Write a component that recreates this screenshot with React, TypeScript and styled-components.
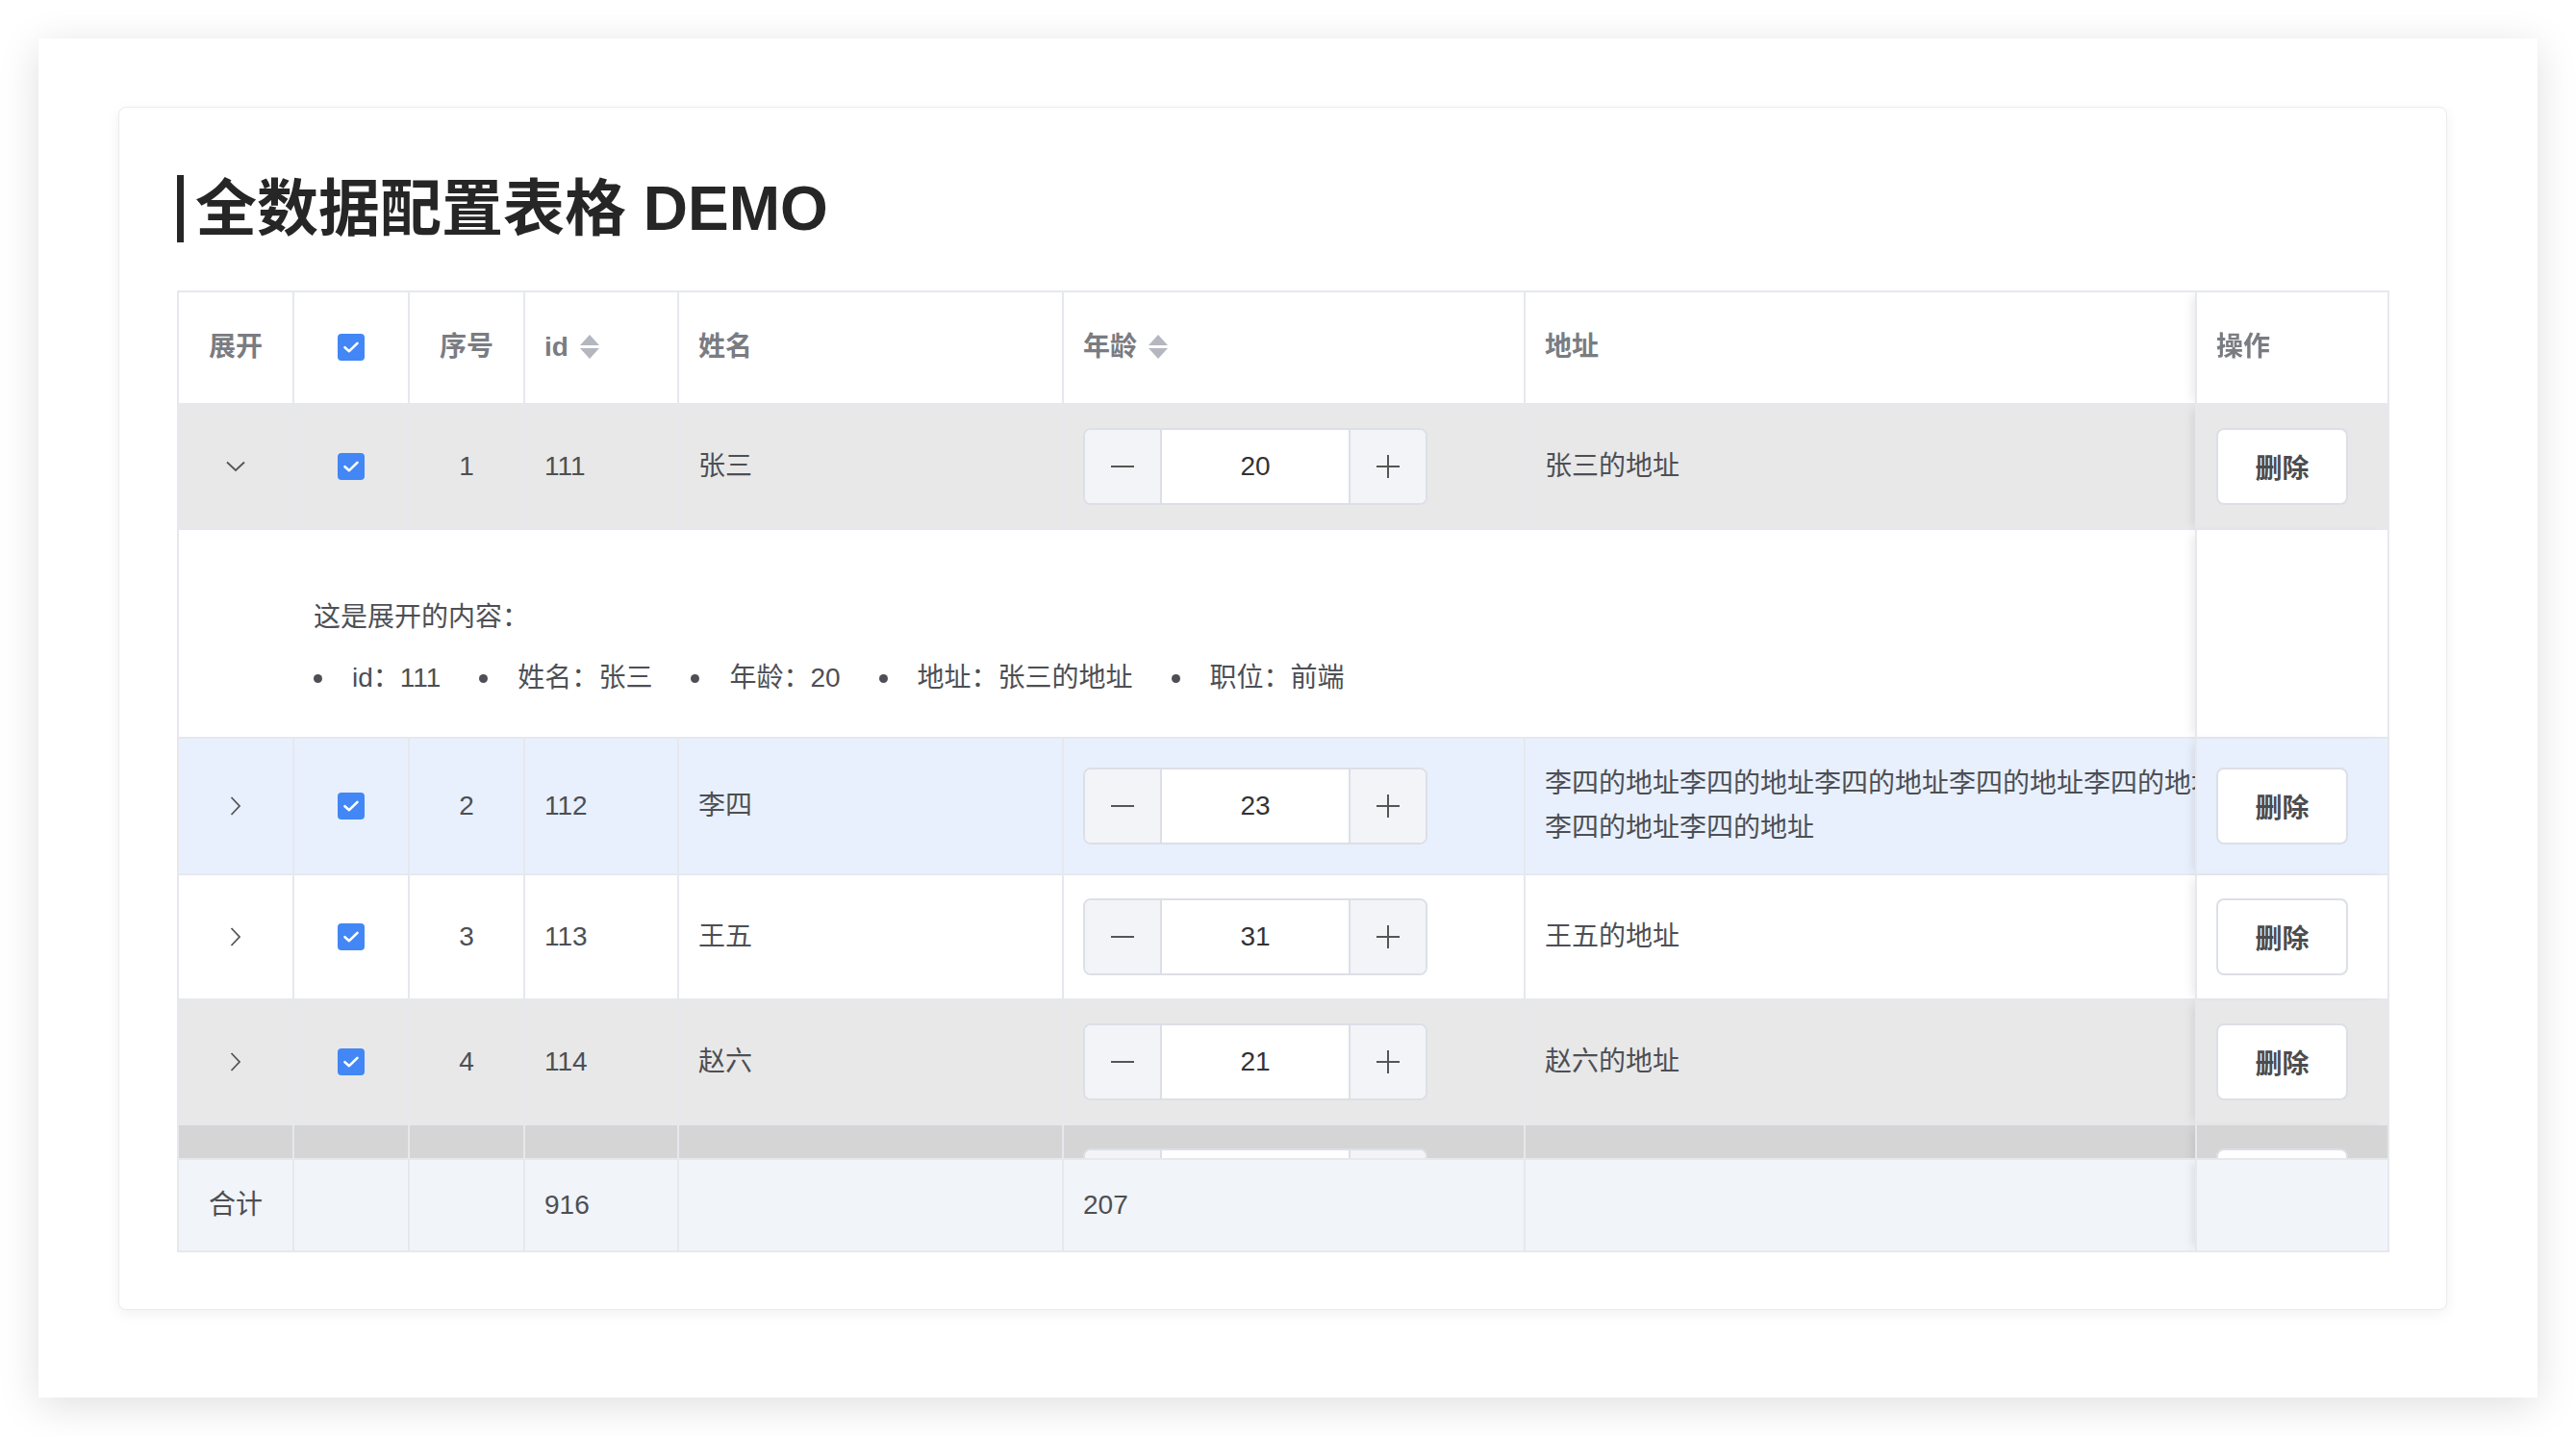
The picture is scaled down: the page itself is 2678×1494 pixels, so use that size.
import React from "react";
import styled, { createGlobalStyle, css } from "styled-components";

const GlobalStyle = createGlobalStyle`
  html, body { margin: 0; padding: 0; background: #ffffff; }
  body { font-family: "Liberation Sans", "Noto Sans CJK SC", sans-serif; }
  * { box-sizing: border-box; }
`;

const LINE = "#e6e8ed";
const COLS = [120, 120, 120, 160, 400, 480, 760, 200];

const Page = styled.div`
  padding: 40px;
`;

const Frame = styled.div`
  background: #ffffff;
  padding: 71px 94px 91px 83px;
  box-shadow: 0 8px 40px rgba(0, 0, 0, 0.13);
`;

const Card = styled.section`
  background: #ffffff;
  border: 1px solid #e9ebef;
  border-radius: 8px;
  box-shadow: 0 4px 14px rgba(0, 0, 0, 0.06);
  padding: 70px 59px 59px 60px;
`;

const Title = styled.h1`
  margin: 0 0 50px;
  border-left: 7px solid #262626;
  padding-left: 12px;
  font-size: 64px;
  line-height: 70px;
  font-weight: 700;
  color: #262626;
`;

const TableBox = styled.div`
  border: 2px solid ${LINE};
  color: #4d4f54;
  font-size: 28px;
`;

const Scroller = styled.div<{ $height?: number }>`
  overflow: hidden;
  ${(p) => (p.$height ? `height: ${p.$height}px;` : "")}
`;

const Grid = styled.table`
  width: 2360px;
  table-layout: fixed;
  border-collapse: separate;
  border-spacing: 0;
`;

const fixedCss = css`
  position: sticky;
  right: 0;
  border-left: 2px solid ${LINE};
  box-shadow: -6px 0 10px -4px rgba(0, 0, 0, 0.1);
`;

const HeadCell = styled.th<{ $align?: string; $fixed?: boolean }>`
  padding: 34px 20px 35px;
  line-height: 46px;
  font-weight: 700;
  color: #7a7c82;
  text-align: ${(p) => p.$align || "left"};
  vertical-align: middle;
  border-right: 2px solid ${LINE};
  border-bottom: 2px solid ${LINE};
  background: #ffffff;
  white-space: nowrap;
  &:last-child {
    border-right: 0;
  }
  ${(p) => p.$fixed && fixedCss}
`;

const Row = styled.tr<{ $bg: string }>`
  background: ${(p) => p.$bg};
`;

const Cell = styled.td<{ $align?: string; $fixed?: boolean }>`
  padding: 24px 20px;
  line-height: 46px;
  text-align: ${(p) => p.$align || "left"};
  vertical-align: middle;
  border-right: 2px solid ${LINE};
  border-bottom: 2px solid ${LINE};
  background: inherit;
  word-break: break-all;
  &:last-child {
    border-right: 0;
  }
  ${(p) => p.$fixed && fixedCss}
`;

const ExpandCell = styled.td`
  padding: 68px 20px 38px 140px;
  border-bottom: 2px solid ${LINE};
  background: inherit;
  line-height: 46px;
`;

const FootCell = styled.td<{ $align?: string; $fixed?: boolean }>`
  padding: 24px 20px;
  line-height: 46px;
  text-align: ${(p) => p.$align || "left"};
  border-right: 2px solid ${LINE};
  border-top: 2px solid ${LINE};
  background: #f1f4f9;
  &:last-child {
    border-right: 0;
  }
  ${(p) => p.$fixed && fixedCss}
`;

const ExpandTitle = styled.div`
  margin: 0;
`;

const DetailList = styled.ul`
  list-style: none;
  margin: 17px 0 0;
  padding: 0;
  display: flex;
  gap: 40px;
`;

const DetailItem = styled.li`
  display: flex;
  align-items: center;
  gap: 31px;
  &::before {
    content: "";
    width: 9px;
    height: 9px;
    border-radius: 50%;
    background: #4d4f54;
  }
`;

const Box = styled.span`
  display: flex;
  width: 28px;
  height: 28px;
  margin: 0 auto;
  border-radius: 4px;
  background: #4287f5;
  align-items: center;
  justify-content: center;
`;

const IconWrap = styled.span`
  display: flex;
  justify-content: center;
  align-items: center;
  height: 46px;
`;

const SortLabel = styled.span`
  display: inline-flex;
  align-items: center;
  gap: 12px;
`;

const Stepper = styled.div`
  display: flex;
  width: 358px;
  height: 80px;
  border: 2px solid #dcdfe6;
  border-radius: 8px;
  overflow: hidden;
  background: #ffffff;
`;

const StepButton = styled.span<{ $side: "left" | "right" }>`
  flex: none;
  width: 80px;
  background: #f2f4f8;
  display: flex;
  align-items: center;
  justify-content: center;
  ${(p) =>
    p.$side === "left"
      ? `border-right: 2px solid #dcdfe6;`
      : `border-left: 2px solid #dcdfe6;`}
`;

const StepValue = styled.span`
  flex: 1;
  display: flex;
  align-items: center;
  justify-content: center;
  color: #333333;
  font-size: 28px;
`;

const DeleteButton = styled.button`
  display: block;
  width: 137px;
  height: 80px;
  padding: 0;
  border: 2px solid #dcdfe6;
  border-radius: 8px;
  background: #ffffff;
  font-family: inherit;
  font-size: 28px;
  font-weight: 700;
  color: #4a4c50;
`;

const CheckMark = () => (
  <Box>
    <svg width="18" height="14" viewBox="0 0 18 14">
      <path
        d="M2.5 7.2 L7 11.2 L15.5 2.8"
        stroke="#ffffff"
        strokeWidth="2.6"
        fill="none"
        strokeLinecap="round"
        strokeLinejoin="round"
      />
    </svg>
  </Box>
);

const Chevron = ({ open }: { open: boolean }) => (
  <IconWrap>
    {open ? (
      <svg width="20" height="12" viewBox="0 0 20 12">
        <path d="M1 1.5 L10 10 L19 1.5" stroke="#555" strokeWidth="1.8" fill="none" />
      </svg>
    ) : (
      <svg width="12" height="20" viewBox="0 0 12 20">
        <path d="M1.5 1 L10 10 L1.5 19" stroke="#555" strokeWidth="1.8" fill="none" />
      </svg>
    )}
  </IconWrap>
);

const SortIcon = () => (
  <svg width="20" height="26" viewBox="0 0 20 26">
    <polygon points="10,0 20,11 0,11" fill="#b4b7bf" />
    <polygon points="0,14 20,14 10,25" fill="#b4b7bf" />
  </svg>
);

const Stroke = ({ plus }: { plus?: boolean }) => (
  <svg width="24" height="24" viewBox="0 0 24 24">
    <line x1="0" y1="12" x2="24" y2="12" stroke="#555" strokeWidth="2" />
    {plus && <line x1="12" y1="0" x2="12" y2="24" stroke="#555" strokeWidth="2" />}
  </svg>
);

const AgeStepper = ({ value }: { value: number }) => (
  <Stepper>
    <StepButton $side="left">
      <Stroke />
    </StepButton>
    <StepValue>{value}</StepValue>
    <StepButton $side="right">
      <Stroke plus />
    </StepButton>
  </Stepper>
);

type Person = {
  seq: number;
  id: number;
  name: string;
  age: number;
  address: string;
  bg: string;
  open?: boolean;
};

const people: Person[] = [
  { seq: 1, id: 111, name: "张三", age: 20, address: "张三的地址", bg: "#e8e8e9", open: true },
  { seq: 2, id: 112, name: "李四", age: 23, address: "李四的地址".repeat(7), bg: "#e8f0fd" },
  { seq: 3, id: 113, name: "王五", age: 31, address: "王五的地址", bg: "#ffffff" },
  { seq: 4, id: 114, name: "赵六", age: 21, address: "赵六的地址", bg: "#e8e8e8" },
  { seq: 5, id: 115, name: "孙七", age: 28, address: "孙七的地址", bg: "#d5d5d5" },
];

const Cols = () => (
  <colgroup>
    {COLS.map((w, i) => (
      <col key={i} style={{ width: w }} />
    ))}
  </colgroup>
);

export default function App() {
  return (
    <>
      <GlobalStyle />
      <Page>
        <Frame>
          <Card>
            <Title>全数据配置表格 DEMO</Title>
            <TableBox>
              <Scroller>
                <Grid>
                  <Cols />
                  <thead>
                    <tr>
                      <HeadCell $align="center">展开</HeadCell>
                      <HeadCell $align="center">
                        <CheckMark />
                      </HeadCell>
                      <HeadCell $align="center">序号</HeadCell>
                      <HeadCell>
                        <SortLabel>
                          id
                          <SortIcon />
                        </SortLabel>
                      </HeadCell>
                      <HeadCell>姓名</HeadCell>
                      <HeadCell>
                        <SortLabel>
                          年龄
                          <SortIcon />
                        </SortLabel>
                      </HeadCell>
                      <HeadCell>地址</HeadCell>
                      <HeadCell $fixed>操作</HeadCell>
                    </tr>
                  </thead>
                </Grid>
              </Scroller>
              <Scroller $height={783}>
                <Grid>
                  <Cols />
                  <tbody>
                    {people.map((p) => (
                      <React.Fragment key={p.id}>
                        <Row $bg={p.bg}>
                          <Cell $align="center">
                            <Chevron open={!!p.open} />
                          </Cell>
                          <Cell $align="center">
                            <CheckMark />
                          </Cell>
                          <Cell $align="center">{p.seq}</Cell>
                          <Cell>{p.id}</Cell>
                          <Cell>{p.name}</Cell>
                          <Cell>
                            <AgeStepper value={p.age} />
                          </Cell>
                          <Cell>{p.address}</Cell>
                          <Cell $fixed>
                            <DeleteButton>删除</DeleteButton>
                          </Cell>
                        </Row>
                        {p.open && (
                          <Row $bg="#ffffff">
                            <ExpandCell colSpan={7}>
                              <ExpandTitle>这是展开的内容：</ExpandTitle>
                              <DetailList>
                                <DetailItem>id：{p.id}</DetailItem>
                                <DetailItem>姓名：{p.name}</DetailItem>
                                <DetailItem>年龄：{p.age}</DetailItem>
                                <DetailItem>地址：{p.address}</DetailItem>
                                <DetailItem>职位：前端</DetailItem>
                              </DetailList>
                            </ExpandCell>
                            <Cell $fixed />
                          </Row>
                        )}
                      </React.Fragment>
                    ))}
                  </tbody>
                </Grid>
              </Scroller>
              <Scroller>
                <Grid>
                  <Cols />
                  <tfoot>
                    <tr>
                      <FootCell $align="center">合计</FootCell>
                      <FootCell />
                      <FootCell />
                      <FootCell>916</FootCell>
                      <FootCell />
                      <FootCell>207</FootCell>
                      <FootCell />
                      <FootCell $fixed />
                    </tr>
                  </tfoot>
                </Grid>
              </Scroller>
            </TableBox>
          </Card>
        </Frame>
      </Page>
    </>
  );
}
